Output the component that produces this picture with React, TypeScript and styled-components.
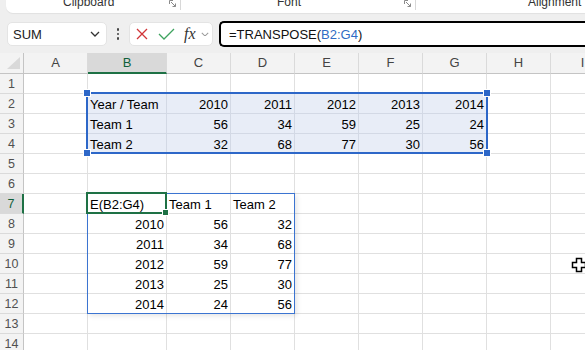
import React from "react";
import styled, { createGlobalStyle } from "styled-components";

const GlobalStyle = createGlobalStyle`
  html, body {
    margin: 0;
    padding: 0;
    background: #efefef;
  }
  body {
    font-family: "Liberation Sans", Arial, sans-serif;
  }
`;

const Window = styled.div`
  width: 585px;
  height: 350px;
  overflow: hidden;
  position: relative;
  background: #efefef;
`;

/* ribbon (only its bottom edge is visible) */
const Ribbon = styled.div`
  height: 13px;
  margin-left: 6px;
  background: #fff;
  border-bottom-left-radius: 7px;
  display: flex;
  overflow: hidden;
  box-shadow: 0 1px 1px rgba(0, 0, 0, 0.06);
`;

const RibbonGroup = styled.div<{ $w: number; $pad: number; $sep?: boolean }>`
  flex: none;
  width: ${(p) => p.$w}px;
  padding-left: ${(p) => p.$pad}px;
  box-sizing: border-box;
  position: relative;
  &::after {
    content: "";
    display: ${(p) => (p.$sep ? "block" : "none")};
    position: absolute;
    right: 0;
    top: 0;
    width: 1px;
    height: 10px;
    background: #d8d8d8;
  }
`;

const GroupLabel = styled.div`
  font-size: 12px;
  line-height: 12px;
  margin-top: -4px;
  color: #333;
  white-space: nowrap;
`;

const Launcher = styled.svg`
  position: absolute;
  top: 0;
  right: 4px;
`;

/* formula bar */
const FormulaRow = styled.div`
  display: flex;
  align-items: center;
  height: 26px;
  margin-top: 8px;
  padding-left: 7px;
`;

const NameBox = styled.div`
  flex: none;
  width: 100px;
  height: 24px;
  box-sizing: border-box;
  background: #fff;
  border: 1px solid #e4e4e4;
  border-radius: 5px;
  display: flex;
  align-items: center;
  justify-content: space-between;
  padding: 0 6px 0 5px;
  font-size: 13px;
  color: #222;
`;

const Dots = styled.div`
  flex: none;
  width: 22px;
  display: flex;
  flex-direction: column;
  align-items: center;
  gap: 2px;
  & span {
    width: 2.5px;
    height: 2.5px;
    border-radius: 50%;
    background: #444;
  }
`;

const ActionBox = styled.div`
  flex: none;
  width: 84px;
  height: 24px;
  box-sizing: border-box;
  background: #fff;
  border: 1px solid #e4e4e4;
  border-radius: 5px;
  display: flex;
  align-items: center;
  padding-left: 6px;
  gap: 0;
`;

const Fx = styled.span`
  font-family: "Liberation Serif", "Times New Roman", serif;
  font-style: italic;
  font-size: 16px;
  color: #333;
  margin-left: 9px;
  margin-right: 5px;
`;

const FormulaInput = styled.div`
  flex: 1;
  margin-left: 6px;
  height: 26px;
  box-sizing: border-box;
  border: 2px solid #000;
  border-right: none;
  border-radius: 5px 0 0 5px;
  background: #fff;
  display: flex;
  align-items: center;
  padding-left: 8px;
  font-size: 13px;
  color: #111;
  white-space: nowrap;
`;

const Ref = styled.span`
  color: #2f6cc4;
`;

/* sheet grid */
const Sheet = styled.div`
  position: relative;
  margin-top: 6px;
  display: grid;
  grid-template-columns: 24px 64px 79px repeat(7, 64px);
  grid-template-rows: 21px;
  grid-auto-rows: 20px;
  background: #fff;
`;

const Corner = styled.div`
  box-sizing: border-box;
  background: #f3f3f3;
  border-right: 1px solid #c4c4c4;
  border-bottom: 1px solid #c4c4c4;
  position: relative;
  &::after {
    content: "";
    position: absolute;
    right: 3px;
    bottom: 4px;
    width: 13px;
    height: 12px;
    background: #d9d9d9;
    clip-path: polygon(100% 0, 100% 100%, 0 100%);
  }
`;

const ColHeader = styled.div<{ $active?: boolean }>`
  box-sizing: border-box;
  background: ${(p) => (p.$active ? "#d9d9d9" : "#f3f3f3")};
  border-right: 1px solid #dadada;
  border-bottom: ${(p) => (p.$active ? "2px solid #1e7145" : "1px solid #c4c4c4")};
  color: ${(p) => (p.$active ? "#10603a" : "#444")};
  font-size: 13px;
  line-height: 20px;
  text-align: center;
`;

const RowHeader = styled.div<{ $active?: boolean }>`
  box-sizing: border-box;
  background: ${(p) => (p.$active ? "#d9d9d9" : "#f3f3f3")};
  border-right: ${(p) => (p.$active ? "2px solid #1e7145" : "1px solid #c4c4c4")};
  border-bottom: 1px solid #dadada;
  color: ${(p) => (p.$active ? "#10603a" : "#505050")};
  font-size: 12.5px;
  line-height: 20px;
  text-align: center;
`;

const Cell = styled.div<{ $num?: boolean; $tint?: boolean }>`
  box-sizing: border-box;
  background: ${(p) => (p.$tint ? "#e8edf7" : "#fff")};
  border-right: 1px solid ${(p) => (p.$tint ? "#d3d9e5" : "#e0e0e0")};
  border-bottom: 1px solid ${(p) => (p.$tint ? "#d3d9e5" : "#e0e0e0")};
  font-size: 13px;
  line-height: 18px;
  padding: 2px 2px 0;
  text-align: ${(p) => (p.$num ? "right" : "left")};
  white-space: nowrap;
  overflow: hidden;
  color: #000;
`;

/* overlays */
const RangeBox = styled.div`
  position: absolute;
  left: 86px;
  top: 39px;
  width: 402px;
  height: 62px;
  box-sizing: border-box;
  border: 2px solid #2d67c8;
  pointer-events: none;
`;

const Handle = styled.div<{ $x: "l" | "r"; $y: "t" | "b" }>`
  position: absolute;
  width: 6px;
  height: 6px;
  background: #2d67c8;
  outline: 1px solid #fff;
  ${(p) => (p.$x === "l" ? "left: -4px;" : "right: -4px;")}
  ${(p) => (p.$y === "t" ? "top: -4px;" : "bottom: -4px;")}
`;

const SpillBox = styled.div`
  position: absolute;
  left: 87px;
  top: 140px;
  width: 208px;
  height: 121px;
  box-sizing: border-box;
  border: 1px solid #3b74d1;
  box-shadow: 2px 2px 5px rgba(0, 0, 0, 0.1);
  pointer-events: none;
`;

const ActiveCell = styled.div`
  position: absolute;
  left: 86px;
  top: 139px;
  width: 81px;
  height: 22px;
  box-sizing: border-box;
  border: 2px solid #1e7145;
  pointer-events: none;
  &::after {
    content: "";
    position: absolute;
    right: -3px;
    bottom: -3px;
    width: 5px;
    height: 5px;
    background: #1e7145;
    outline: 1px solid #fff;
  }
`;

const Cursor = styled.svg`
  position: absolute;
  left: 571px;
  top: 257px;
`;

const COLS = ["A", "B", "C", "D", "E", "F", "G", "H", "I"];

const values: Record<string, string | number> = {
  B2: "Year / Team", C2: 2010, D2: 2011, E2: 2012, F2: 2013, G2: 2014,
  B3: "Team 1", C3: 56, D3: 34, E3: 59, F3: 25, G3: 24,
  B4: "Team 2", C4: 32, D4: 68, E4: 77, F4: 30, G4: 56,
  B7: "E(B2:G4)", C7: "Team 1", D7: "Team 2",
  B8: 2010, C8: 56, D8: 32,
  B9: 2011, C9: 34, D9: 68,
  B10: 2012, C10: 59, D10: 77,
  B11: 2013, C11: 25, D11: 30,
  B12: 2014, C12: 24, D12: 56,
};

const inRange = (c: number, r: number) => r >= 2 && r <= 4 && c >= 1 && c <= 6;

const Chevron = ({ color, size }: { color: string; size: number }) => (
  <svg width={size} height={size * 0.6} viewBox="0 0 10 6">
    <path d="M1 1 L5 5 L9 1" fill="none" stroke={color} strokeWidth="1.3" />
  </svg>
);

const LauncherIcon = () => (
  <Launcher width="8" height="8" viewBox="0 0 8 8">
    <path d="M0.5 0.5 H4 M0.5 0.5 V4 M2 2 L6.5 6.5 M6.5 3.5 V6.5 H3.5" fill="none" stroke="#8a8a8a" strokeWidth="1" />
  </Launcher>
);

export default function App() {
  const rows = Array.from({ length: 14 }, (_, i) => i + 1);
  return (
    <Window>
      <GlobalStyle />
      <Ribbon>
        <RibbonGroup $w={175} $pad={57} $sep>
          <GroupLabel>Clipboard</GroupLabel>
          <LauncherIcon />
        </RibbonGroup>
        <RibbonGroup $w={235} $pad={96} $sep>
          <GroupLabel>Font</GroupLabel>
          <LauncherIcon />
        </RibbonGroup>
        <RibbonGroup $w={200} $pad={112}>
          <GroupLabel>Alignment</GroupLabel>
        </RibbonGroup>
      </Ribbon>

      <FormulaRow>
        <NameBox>
          <span>SUM</span>
          <Chevron color="#333" size={10} />
        </NameBox>
        <Dots>
          <span />
          <span />
          <span />
        </Dots>
        <ActionBox>
          <svg width="12" height="12" viewBox="0 0 12 12">
            <path d="M1 1 L11 11 M11 1 L1 11" stroke="#d13438" strokeWidth="1.3" />
          </svg>
          <svg width="17" height="12" viewBox="0 0 17 12" style={{ marginLeft: 10 }}>
            <path d="M1 6 L6 11 L16 1" fill="none" stroke="#3ea35f" strokeWidth="1.3" />
          </svg>
          <Fx>fx</Fx>
          <Chevron color="#9a9a9a" size={8} />
        </ActionBox>
        <FormulaInput>
          =TRANSPOSE(<Ref>B2:G4</Ref>)
        </FormulaInput>
      </FormulaRow>

      <Sheet>
        <Corner />
        {COLS.map((c) => (
          <ColHeader key={c} $active={c === "B"}>
            {c}
          </ColHeader>
        ))}
        {rows.map((r) => (
          <React.Fragment key={r}>
            <RowHeader $active={r === 7}>{r}</RowHeader>
            {COLS.map((c, ci) => {
              const v = values[c + r];
              return (
                <Cell key={c} $num={typeof v === "number"} $tint={inRange(ci, r)}>
                  {v}
                </Cell>
              );
            })}
          </React.Fragment>
        ))}
        <RangeBox>
          <Handle $x="l" $y="t" />
          <Handle $x="l" $y="b" />
          <Handle $x="r" $y="t" />
          <Handle $x="r" $y="b" />
        </RangeBox>
        <SpillBox />
        <ActiveCell />
      </Sheet>

      <Cursor width="16" height="16" viewBox="0 0 16 16">
        <path
          d="M5.5 1.5 H10.5 V5.5 H14.5 V10.5 H10.5 V14.5 H5.5 V10.5 H1.5 V5.5 H5.5 Z"
          fill="#fff"
          stroke="#000"
          strokeWidth="1.5"
        />
      </Cursor>
    </Window>
  );
}
